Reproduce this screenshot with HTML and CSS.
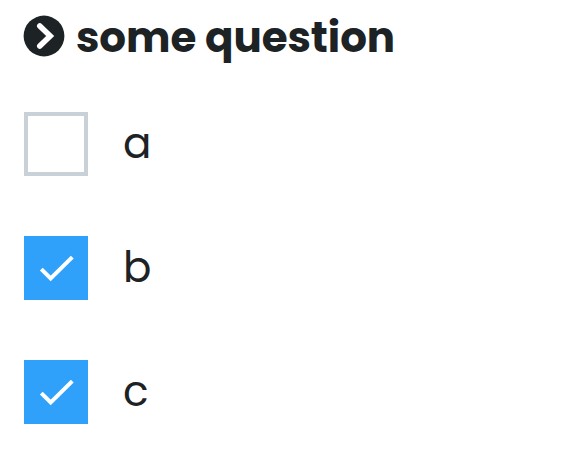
FILE: index.html
```html
<!DOCTYPE html>
<html lang="en">
<head>
<meta charset="utf-8">
<title>Question</title>
<link rel="stylesheet" href="styles.css">
</head>
<body>
<main class="question">
  <h1 class="title">
    <svg class="title-icon" viewBox="0 0 42 42" aria-hidden="true"><circle cx="21" cy="21" r="20.4" fill="#1d2225"/><path d="M16.8 10.9L27.2 21L16.8 31.1" fill="none" stroke="#fff" stroke-width="5.6" stroke-linecap="round" stroke-linejoin="miter"/></svg>
    <span class="title-text">some question</span>
  </h1>
  <ul class="options">
    <li class="option"><span class="box"></span><span class="label">a</span></li>
    <li class="option"><span class="box checked"><svg class="tick" viewBox="0 0 64 64" aria-hidden="true"><path d="M17.3 33.2L26.7 42.5L48.3 21.2" fill="none" stroke="#fff" stroke-width="4"/></svg></span><span class="label">b</span></li>
    <li class="option"><span class="box checked"><svg class="tick" viewBox="0 0 64 64" aria-hidden="true"><path d="M17.3 33.2L26.7 42.5L48.3 21.2" fill="none" stroke="#fff" stroke-width="4"/></svg></span><span class="label">c</span></li>
  </ul>
</main>
</body>
</html>
```
FILE: styles.css
```css
* {
  box-sizing: border-box;
}

body {
  margin: 0;
  background: #fff;
  color: #1d2225;
  font-family: Poppins, Inter, sans-serif;
}

.question {
  padding: 0 23px;
}

.title {
  display: flex;
  align-items: center;
  gap: 11px;
  height: 72px;
  margin: 0 0 40px;
  font-size: 42px;
  font-weight: 700;
  line-height: 68px;
  white-space: nowrap;
}

.title-icon {
  width: 42px;
  height: 42px;
}

.title-text {
  padding-top: 4px;
  letter-spacing: -0.08px;
}

.options {
  display: flex;
  flex-direction: column;
  gap: 60px;
  margin: 0 0 0 1px;
  padding: 0;
  list-style: none;
}

.option {
  display: flex;
  align-items: center;
  gap: 35px;
  height: 64px;
}

.box {
  width: 64px;
  height: 64px;
  border: 4px solid #c9d1d8;
}

.checked {
  border: 0;
  background: #2fa1fb;
}

.tick {
  display: block;
  width: 64px;
  height: 64px;
}

.label {
  font-size: 42px;
  line-height: 64px;
}
```
